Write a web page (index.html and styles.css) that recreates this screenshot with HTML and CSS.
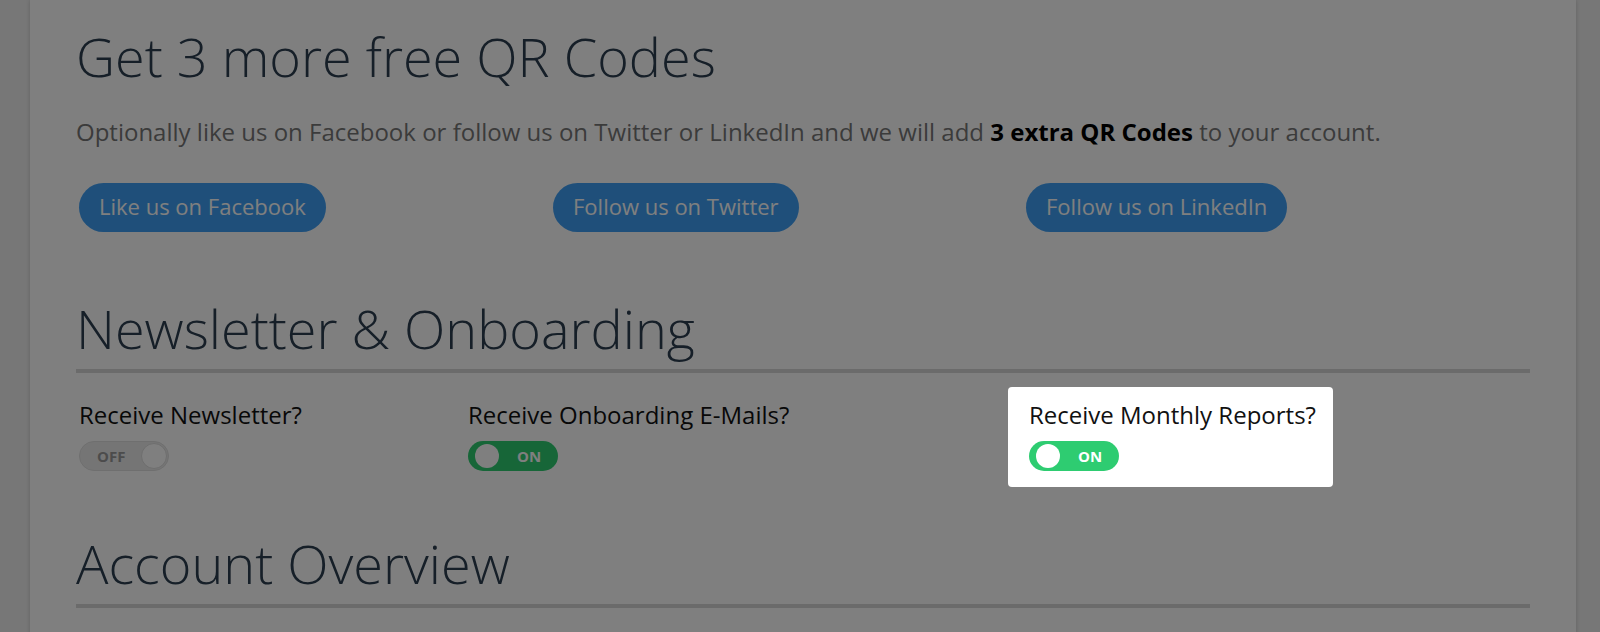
FILE: index.html
```html
<!DOCTYPE html>
<html lang="en">
<head>
<meta charset="utf-8">
<title>Account</title>
<link rel="stylesheet" href="styles.css">
</head>
<body>
<div class="page">
  <main class="card">
    <section class="promo">
      <h2 class="promo-title">Get 3 more free QR Codes</h2>
      <p class="promo-text">Optionally like us on Facebook or follow us on Twitter or LinkedIn and we will add <strong>3 extra QR Codes</strong> to your account.</p>
      <div class="social-row">
        <div class="social-cell"><a class="btn-social" href="#">Like us on Facebook</a></div>
        <div class="social-cell"><a class="btn-social" href="#">Follow us on Twitter</a></div>
        <div class="social-cell"><a class="btn-social" href="#">Follow us on LinkedIn</a></div>
      </div>
    </section>

    <section class="settings">
      <h1 class="section-title">Newsletter &amp; Onboarding</h1>
      <div class="toggle-row">
        <div class="toggle-group">
          <div class="toggle-label">Receive Newsletter?</div>
          <div class="switch switch-off"><span class="switch-text">OFF</span><span class="switch-knob"></span></div>
        </div>
        <div class="toggle-group">
          <div class="toggle-label">Receive Onboarding E-Mails?</div>
          <div class="switch switch-on"><span class="switch-knob"></span><span class="switch-text">ON</span></div>
        </div>
        <div class="toggle-group">
          <div class="toggle-highlight">
            <div class="toggle-label">Receive Monthly Reports?</div>
            <div class="switch switch-on"><span class="switch-knob"></span><span class="switch-text">ON</span></div>
          </div>
        </div>
      </div>
    </section>

    <section class="overview">
      <h1 class="section-title">Account Overview</h1>
    </section>
  </main>
</div>
<div class="tour-overlay"></div>
</body>
</html>
```

FILE: styles.css
```css
html, body {
  margin: 0;
  padding: 0;
}

body {
  background: #eeeeee;
  font-family: "Open Sans", "Noto Sans", "Liberation Sans", sans-serif;
  color: #111;
  height: 632px;
  overflow: hidden;
}

.page {
  padding-left: 30px;
  width: 1546px;
}

.card {
  display: block;
  background: #ffffff;
  box-shadow: 0 0 4px rgba(0, 0, 0, 0.18);
  padding: 24px 46px 40px 46px;
  min-height: 632px;
  box-sizing: border-box;
}

.promo-title {
  margin: 0;
  font-size: 54px;
  line-height: 64px;
  font-weight: 300;
  color: #2c3e50;
}

.promo-text {
  margin: 28px 0 0 0;
  font-size: 24px;
  line-height: 32px;
  color: #777777;
}

.promo-text strong {
  color: #000;
  font-weight: 700;
}

.social-row {
  margin-top: 35px;
  display: grid;
  grid-template-columns: 474px 473px auto;
  padding-left: 3px;
}

.btn-social {
  display: inline-flex;
  align-items: center;
  box-sizing: border-box;
  height: 49px;
  padding: 0 20px 3px 20px;
  border-radius: 25px;
  background: #3e9ff5;
  color: #ffffff;
  font-size: 22px;
  text-decoration: none;
}

.section-title {
  margin: 64px 0 0 0;
  font-size: 54px;
  line-height: 64px;
  font-weight: 300;
  color: #2c3e50;
  padding-bottom: 9px;
  border-bottom: 4px solid #d6d6d6;
}

.overview .section-title {
  margin-top: 60px;
}

.toggle-row {
  margin-top: 26px;
  display: grid;
  grid-template-columns: 389px 561px auto;
  padding-left: 3px;
  align-items: start;
}

.toggle-label {
  font-size: 24px;
  line-height: 32px;
  color: #111;
  white-space: nowrap;
}

.toggle-highlight {
  position: relative;
  z-index: 20;
  display: inline-block;
  background: #ffffff;
  border-radius: 4px;
  padding: 12px 17px 16px 21px;
  margin: -12px -17px -16px -21px;
}

.switch {
  position: relative;
  margin-top: 10px;
  width: 90px;
  height: 30px;
  border-radius: 15px;
  box-sizing: border-box;
  display: flex;
  align-items: center;
}

.switch-on {
  background: #2ecc71;
}

.switch-off {
  background: #ebebeb;
  border: 1px solid #dedede;
}

.switch-knob {
  position: absolute;
  width: 24px;
  height: 24px;
  border-radius: 50%;
  background: #ffffff;
}

.switch-on .switch-knob {
  left: 7px;
  top: 3px;
}

.switch-off .switch-knob {
  right: 1px;
  top: 1px;
  width: 26px;
  height: 26px;
  border: 1px solid #dcdcdc;
  box-sizing: border-box;
}

.switch-text {
  font-size: 15px;
  font-weight: 700;
  line-height: 1;
}

.switch-on .switch-text {
  color: #ffffff;
  margin-left: 49px;
}

.switch-off .switch-text {
  color: #999999;
  margin-left: 17px;
}

.tour-overlay {
  position: fixed;
  inset: 0;
  z-index: 10;
  background: rgba(0, 0, 0, 0.5);
}
```
